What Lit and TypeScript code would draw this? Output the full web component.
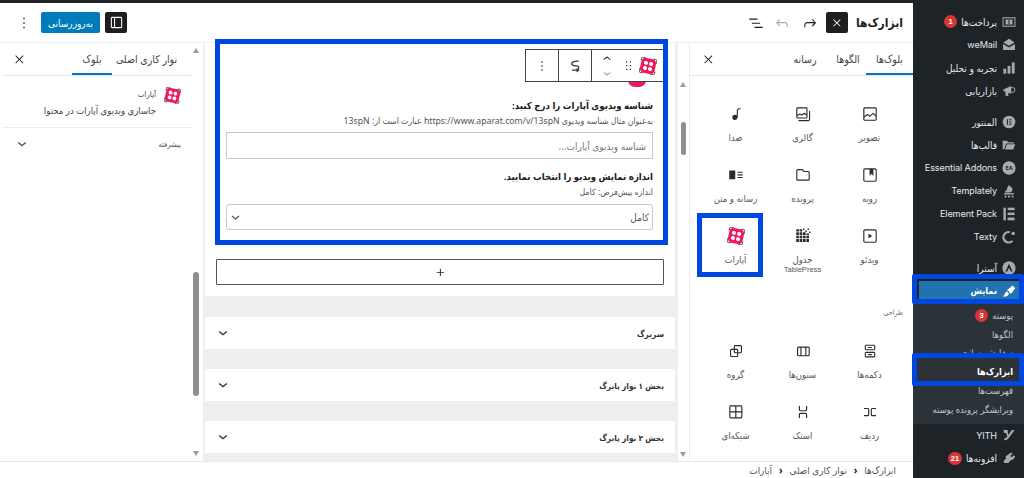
import { LitElement, html, css, svg } from "lit";
import { customElement } from "lit/decorators.js";

const P: Record<string, string> = {
  image: "M19 3H5c-1.1 0-2 .9-2 2v14c0 1.1.9 2 2 2h14c1.1 0 2-.9 2-2V5c0-1.1-.9-2-2-2zM5 4.5h14c.3 0 .5.2.5.5v8.4l-3-2.9c-.3-.3-.8-.3-1 0L11.9 14 9 12c-.3-.2-.6-.2-.8 0l-3.6 2.6V5c-.1-.3.1-.5.4-.5zm14 15H5c-.3 0-.5-.2-.5-.5v-2.4l4.1-3 3 1.9c.3.2.7.2.9-.1L16 12l3.5 3.4V19c0 .3-.2.5-.5.5z",
  gallery: "M16.375 4.5H4.625a.125.125 0 0 0-.125.125v8.254l2.859-1.54a.75.75 0 0 1 .68-.016l2.384 1.142 2.89-2.074a.75.75 0 0 1 .874 0l2.313 1.66V4.625a.125.125 0 0 0-.125-.125zm.125 9.398-2.75-1.975-2.813 2.02a.75.75 0 0 1-.76.067l-2.444-1.17L4.5 14.583v1.792c0 .069.056.125.125.125h11.75a.125.125 0 0 0 .125-.125v-2.477zM4.625 3C3.728 3 3 3.728 3 4.625v11.75C3 17.273 3.728 18 4.625 18h11.75c.898 0 1.625-.727 1.625-1.625V4.625C18 3.728 17.273 3 16.375 3H4.625zM20 8v11c0 .69-.31 1-.999 1H6v1.5h13.001c1.52 0 2.499-.982 2.499-2.5V8H20z",
  audio: "M17.7 4.3c-1.2 0-2.8 0-3.8 1-.6.6-.9 1.5-.9 2.6V14c-.6-.6-1.5-1-2.5-1C8.6 13 7 14.6 7 16.5S8.6 20 10.5 20c1.5 0 2.8-1 3.3-2.3.5-.8.7-1.8.7-2.7V7.9c0-.7.2-1.2.5-1.6.6-.6 1.8-.6 2.8-.6h.3V4.3h-.4z",
  cover: "M18.7 3H5.3C4 3 3 4 3 5.3v13.4C3 20 4 21 5.3 21h13.4c1.3 0 2.3-1 2.3-2.3V5.3C21 4 20 3 18.7 3zm.8 15.7c0 .4-.4.8-.8.8H5.3c-.4 0-.8-.4-.8-.8V5.3c0-.4.4-.8.8-.8h6.2v8.9l2.5-3.1 2.5 3.1V4.5h2.2c.4 0 .8.4.8.8v13.4z",
  file: "M12.848 8a1 1 0 0 1-.914-.594l-.723-1.63a.5.5 0 0 0-.447-.276H5a.5.5 0 0 0-.5.5v11.5a.5.5 0 0 0 .5.5h14a.5.5 0 0 0 .5-.5v-9A.5.5 0 0 0 19 8h-6.152zm.612-1.5H19a2 2 0 0 1 2 2v9a2 2 0 0 1-2 2H5a2 2 0 0 1-2-2V6a2 2 0 0 1 2-2h5.764a2 2 0 0 1 1.789 1.106l.907 1.394z",
  media: "M3 6v11.5h8V6H3zm11 3h7V7.5h-7V9zm7 3.5h-7V11h7v1.5zM14 16h7v-1.5h-7V16z",
  video: "M18.7 3H5.3C4 3 3 4 3 5.3v13.4C3 20 4 21 5.3 21h13.4c1.3 0 2.3-1 2.3-2.3V5.3C21 4 20 3 18.7 3zm.8 15.7c0 .4-.4.8-.8.8H5.3c-.4 0-.8-.4-.8-.8V5.3c0-.4.4-.8.8-.8h13.4c.4 0 .8.4.8.8v13.4zM10 15l5-3-5-3v6z",
  buttons: "M14.5 17.5H9.5V16H14.5V17.5Z M14.5 8H9.5V6.5H14.5V8Z M7 3.5H17C18.1 3.5 19 4.4 19 5.5V9C19 10.1 18.1 11 17 11H7C5.9 11 5 10.1 5 9V5.5C5 4.4 5.9 3.5 7 3.5ZM17 5H7C6.7 5 6.5 5.2 6.5 5.5V9C6.5 9.3 6.7 9.5 7 9.5H17C17.3 9.5 17.5 9.3 17.5 9V5.5C17.5 5.2 17.3 5 17 5Z M7 13H17C18.1 13 19 13.9 19 15V18.5C19 19.6 18.1 20.5 17 20.5H7C5.9 20.5 5 19.6 5 18.5V15C5 13.9 5.9 13 7 13ZM17 14.5H7C6.7 14.5 6.5 14.7 6.5 15V18.5C6.5 18.8 6.7 19 7 19H17C17.3 19 17.5 18.8 17.5 18.5V15C17.5 14.7 17.3 14.5 17 14.5Z",
  columns: "M15 7.5h-5v10h5v-10Zm1.5 0v10H19a.5.5 0 0 0 .5-.5V8a.5.5 0 0 0-.5-.5h-2.5ZM6 7.5h2.5v10H6a.5.5 0 0 1-.5-.5V8a.5.5 0 0 1 .5-.5ZM6 6h13a2 2 0 0 1 2 2v9a2 2 0 0 1-2 2H6a2 2 0 0 1-2-2V8a2 2 0 0 1 2-2Z",
  group: "M18 4h-7c-1.1 0-2 .9-2 2v3H6c-1.1 0-2 .9-2 2v7c0 1.1.9 2 2 2h7c1.1 0 2-.9 2-2v-3h3c1.1 0 2-.9 2-2V6c0-1.1-.9-2-2-2zm-4.5 14c0 .3-.2.5-.5.5H6c-.3 0-.5-.2-.5-.5v-7c0-.3.2-.5.5-.5h3V13c0 1.1.9 2 2 2h2.5v3zm0-4.5H11c-.3 0-.5-.2-.5-.5v-2.5H13c.3 0 .5.2.5.5v2.5zm5-.5c0 .3-.2.5-.5.5h-3V11c0-1.1-.9-2-2-2h-2.5V6c0-.3.2-.5.5-.5h7c.3 0 .5.2.5.5v7z",
  row: "M4 6.5h5a2 2 0 0 1 2 2v7a2 2 0 0 1-2 2H4V16h5a.5.5 0 0 0 .5-.5v-7A.5.5 0 0 0 9 8H4V6.5Zm16 0h-5a2 2 0 0 0-2 2v7a2 2 0 0 0 2 2h5V16h-5a.5.5 0 0 1-.5-.5v-7A.5.5 0 0 1 15 8h5V6.5Z",
  stack: "M17.5 4v5a2 2 0 0 1-2 2h-7a2 2 0 0 1-2-2V4H8v5a.5.5 0 0 0 .5.5h7A.5.5 0 0 0 16 9V4h1.5Zm0 16v-5a2 2 0 0 0-2-2h-7a2 2 0 0 0-2 2v5H8v-5a.5.5 0 0 1 .5-.5h7a.5.5 0 0 1 .5.5v5h1.5Z",
  grid: "M3 5c0-1.1.9-2 2-2h13.5c1.1 0 2 .9 2 2v13.5c0 1.1-.9 2-2 2H5c-1.1 0-2-.9-2-2zm2-.5h6V11H4.500V5c0-.28.22-.5.5-.5zm-.5 8v6c0 .28.22.5.5.5h6v-6.500zm8 0V19h6c.28 0 .5-.22.5-.5v-6zm0-8V11H19V5c0-.28-.22-.5-.5-.5z",
  table: "M3 7h3.500v3.500H3zM7.500 7H11v3.500H7.500zM12 7h3.500v3.500H12zM16.500 8.500H20v2h-3.500zM3 11.500h3.500V15H3zM7.500 11.500H11V15H7.500zM12 11.500h3.500V15H12zM16.500 11.500H20V15h-3.500zM3 16h3.500v4H3zM7.500 16H11v4H7.500zM12 16h3.500v4H12zM16.500 16H20v4h-3.500zM3 3h3.500v3H3zM7.500 3H11v3H7.500zM12 2h2v2h-2zM15 4.500h2v2h-2zM18 2h2v2h-2zM20 6h2v2h-2z",
  close: "M13 11.800l6.200-6.300-1.200-1.200-6.300 6.200-6.200-6.200-1.200 1.200 6.200 6.300-6.200 6.200 1.200 1.200 6.200-6.200 6.300 6.200 1.200-1.200z",
  chevron: "M6.300 8.500 12 13.200 17.700 8.500 19.300 10.200 12 16.300 4.700 10.200z",
  more: "M13 19h-2v-2h2v2zm0-6h-2v-2h2v2zm0-6h-2V5h2v2z",
  plus: "M11 12.500V17.500H12.500V12.500H17.500V11H12.500V6H11V11H6V12.500H11Z",
  sidebar: "M18 4H6c-1.100 0-2 .9-2 2v12c0 1.100.9 2 2 2h12c1.100 0 2-.9 2-2V6c0-1.100-.9-2-2-2zM8.500 18.500H6c-.3 0-.5-.2-.5-.5V6c0-.3.2-.5.5-.5h2.500v13zm10-.5c0 .3-.2.5-.5.5h-8v-13h8c.3 0 .5.2.5.5v12z",
  undo: "M18.300 11.700c-.6-.6-1.400-.9-2.300-.9H6.700l2.900-3.300-1.100-1-4.500 5L8.500 16.500l1-1-2.700-3.200H16c.5 0 .9.2 1.300.5 1 1 1 3.400 1 4.500v.3h1.500v-.2c0-1.500 0-4.300-1.500-5.700z",
  redo: "M15.600 6.500l-1.100 1 2.900 3.300H8c-.9 0-1.700.3-2.300.9-1.400 1.500-1.400 4.200-1.400 5.600v.2h1.500v-.3c0-1.100 0-3.500 1-4.500.3-.3.700-.5 1.300-.5h9.200L14.500 15.500l1.100 1.100 4.500-4.600-4.500-5.500z",
  list: "M3 6h11v1.500H3V6zm3.500 5.500h11V13h-11v-1.500zM21 17H10v1.500h11V17z",
  transform: "M17 5.500C12 5 7.500 6.500 7.500 9s4.500 2.700 7.500 3.200 3 4.800-2 5.300H8",
  up: "M6.500 12.400 12 8l5.500 4.400-.9 1.200L12 10l-4.500 3.600-1-1.200z",
  drag: "M8 7h2V5H8v2zm0 6h2v-2H8v2zm0 6h2v-2H8v2zm6-14v2h2V5h-2zm0 8h2v-2h-2v2zm0 6h2v-2h-2v2z",
};

const ic = (n: string, size = 18, cls = "") =>
  html`<svg class=${cls} width=${size} height=${size} viewBox="0 0 24 24" fill="currentColor" fill-rule="evenodd" aria-hidden="true">${svg`<path d=${P[n]}></path>`}</svg>`;

const aparat = (size: number) =>
  html`<svg width=${size} height=${size} viewBox="0 0 24 24" aria-hidden="true">${svg`
    <g transform="rotate(12 12 12)">
      <rect x="2" y="2" width="20" height="20" rx="5.500" fill="#ed1b5a"></rect>
      <path d="M1.500 6.500V4a2.500 2.500 0 0 1 2.500-2.500h2.500M17.500 1.500H20A2.500 2.500 0 0 1 22.500 4v2.500M22.500 17.500V20a2.500 2.500 0 0 1-2.500 2.500h-2.500M6.500 22.500H4A2.500 2.500 0 0 1 1.500 20v-2.500" fill="none" stroke="#4a2030" stroke-width="1.200"></path>
      <circle cx="8.500" cy="8.500" r="2.700" fill="#fff"></circle><circle cx="15.500" cy="8.500" r="2.700" fill="#fff"></circle>
      <circle cx="8.500" cy="15.500" r="2.700" fill="#fff"></circle><circle cx="15.500" cy="15.500" r="2.700" fill="#fff"></circle>
    </g>`}</svg>`;

const menuIcon: Record<string, unknown> = {
  pay: svg`<rect x="1.500" y="4" width="17" height="12" fill="none" stroke="currentColor" stroke-width="1.500"></rect><rect x="5" y="6.500" width="10" height="7" fill="currentColor"></rect><path d="M10 7v6" stroke="#1d2327" stroke-width="1.500"></path>`,
  mail: svg`<path d="M10 1 18 6.500 10 11 2 6.500z"></path><path d="M1.500 8.500 10 13.500l8.500-5V17h-17z"></path>`,
  bars: svg`<rect x="2" y="11" width="4" height="7"></rect><rect x="8" y="7" width="4" height="11"></rect><rect x="14" y="2" width="4" height="16"></rect>`,
  mega: svg`<path d="M2 8 13 3v11L2 10z"></path><rect x="5" y="10" width="4" height="7"></rect><circle cx="15" cy="8.500" r="3.500" fill="none" stroke="currentColor" stroke-width="1.400"></circle>`,
  elem: svg`<circle cx="10" cy="10" r="9"></circle><path d="M7 6h1.500v8H7zM10 6h3.500v1.500H10zM10 9.250h3.500v1.500H10zM10 12.500h3.500V14H10z" fill="#1d2327"></path>`,
  folder: svg`<path d="M1 4h6l2 2h8v2H6L3 16H1z"></path><path d="M7 9h12l-3 7.500H4z"></path>`,
  ea: svg`<circle cx="10" cy="10" r="9.500"></circle>`,
  tpl: svg`<path d="M10 1c1 3 5 3 5 7 0 3-2 4-5 4H4c0-3 3-2 3-5 0-2 2-3 3-6z"></path><rect x="3" y="13" width="14" height="2"></rect><circle cx="5" cy="18" r="1.500"></circle><circle cx="10" cy="18" r="1.500"></circle><circle cx="15" cy="18" r="1.500"></circle>`,
  pack: svg`<rect x="2" y="1" width="3.500" height="18"></rect><rect x="8" y="1" width="10" height="3.500"></rect><rect x="8" y="8" width="10" height="3.500"></rect><rect x="8" y="15" width="10" height="4"></rect>`,
  texty: svg`<path d="M15 15.500A7.500 7.500 0 1 1 11 3" fill="none" stroke="currentColor" stroke-width="3"></path><circle cx="16" cy="5" r="2.500"></circle>`,
  astra: svg`<circle cx="10" cy="10" r="9.500"></circle><path d="M10 4 15 15h-2.500L10 9.500 7.500 15H5z" fill="#1d2327"></path>`,
  brush: svg`<path d="M7 9 15 2l4 4-6 8-2-1-1.500-3z"></path><path d="M7 10.500l3 3c-1 4-5 5-8.500 4.500 2-1 2-5 5.500-7.500z"></path>`,
  yith: svg`<path d="M2 3h6l1 7 5-7h4l-8 11c-2 3-5 4-7 3l1-3c2 .5 3 0 3.500-1L6 7H3z"></path>`,
  plug: svg`<path d="M13 2l2 2-3 3 2 2 3-3 2 2-4 5-2-.5-4 4.500H3.500L2 15l4-5-1-2z"></path>`,
};

const mi = (name: string, label?: string) =>
  html`<span class="mi"><svg width="14" height="14" viewBox="0 0 20 20" fill="currentColor" aria-hidden="true">${menuIcon[name]}</svg>${label ? html`<b>${label}</b>` : ""}</span>`;

const blocks1 = [
  ["image", "تصویر"], ["gallery", "گالری"], ["audio", "صدا"],
  ["cover", "رویه"], ["file", "پرونده"], ["media", "رسانه و متن"],
  ["video", "ویدئو"], ["table", "جدول", "TablePress"], ["aparat", "آپارات"],
];
const blocks2 = [
  ["buttons", "دکمه‌ها"], ["columns", "ستون‌ها"], ["group", "گروه"],
  ["row", "ردیف"], ["stack", "استک"], ["grid", "شبکه‌ای"],
];

@customElement("app-root")
export class AppRoot extends LitElement {
  static styles = css`
    :host { display: flex; flex-direction: column; width: 1024px; height: 478px; overflow: hidden; position: relative;
      direction: rtl; background: #fff; color: #333; font-family: "Noto Sans", "DejaVu Sans Condensed", "DejaVu Sans", sans-serif; font-size: 10px; }
    * { box-sizing: border-box; }
    svg { display: block; flex: none; }
    .topline { height: 3px; background: #1d2327; flex: none; }
    .body { flex: 1; display: flex; min-height: 0; }

    .admin { width: 111px; flex: none; background: #1d2327; color: #e6e8ea; padding-top: 7px; font-size: 10px; }
    .r { height: 23px; display: flex; align-items: center; padding: 0 8px 0 0; white-space: nowrap; }
    .sep { margin-top: 8px; }
    .mi { width: 14px; height: 14px; color: #a7aaad; margin-left: 5px; position: relative; flex: none; }
    .mi b { position: absolute; inset: 0; display: flex; align-items: center; justify-content: center; font-size: 5.500px; color: #1d2327; direction: ltr; }
    .lat { font-family: "Inter", "Liberation Sans", sans-serif; font-size: 9.100px; letter-spacing: -.1px; }
    .badge { background: #d63638; color: #fff; border-radius: 9px; font-size: 7.500px; font-weight: 700; min-width: 13px; height: 13px; padding: 0 3px; margin-right: 4px;
      display: inline-flex; align-items: center; justify-content: center; font-family: "Liberation Sans", sans-serif; }
    .cur { color: #fff; background: #2271b1; margin: 2px 5px; width: 100px; height: 19px; padding-right: 3px; font-weight: 700; font-size: 9.200px; }
    .cur .mi { color: #fff; }
    .sub { background: #2c3338; padding: 4px 0 5px; color: #c3c4c7; font-size: 9.400px; }
    .sub div { height: 18.800px; display: flex; align-items: center; padding-right: 11px; white-space: nowrap; }
    .sub .act { color: #fff; font-weight: 700; font-size: 9.200px; }

    .main { flex: 1; display: flex; flex-direction: column; min-width: 0; }
    .head { height: 40px; flex: none; display: flex; align-items: center; border-bottom: 1px solid #eee; padding: 0 10px 0 15px; }
    .title { font-size: 12px; font-weight: 700; color: #222; width: 41px; white-space: nowrap; margin-left: 14px; }
    .blk { width: 22px; height: 21px; border-radius: 2px; background: #1e1e1e; color: #fff; display: flex; align-items: center; justify-content: center; flex: none; }
    .redo { margin-right: 7px; color: #1e1e1e; }
    .undo { margin-right: 10px; color: #aaa; }
    .list { margin-right: 8px; color: #1e1e1e; }
    .spacer { flex: 1; }
    .publish { width: 59px; height: 21px; background: #007cba; color: #fff; border-radius: 2px; display: flex; align-items: center; justify-content: center; font-size: 10px; margin-right: 5px; }
    .kebab { margin-right: 8px; color: #333; }

    .panels { flex: 1; display: flex; min-height: 0; }
    .ins { width: 223px; flex: none; display: flex; flex-direction: column; min-height: 0; overflow: hidden; }
    .tabs { height: 33px; flex: none; display: flex; align-items: stretch; border-bottom: 1px solid #e4e4e4; }
    .tab { display: flex; align-items: center; justify-content: center; color: #444; font-size: 10.500px; white-space: nowrap; }
    .tab.on { box-shadow: inset 0 -2px 0 #007cba; }
    .x { margin-right: auto; align-self: center; color: #222; }
    .grid { display: grid; grid-template-columns: repeat(3, 67px); grid-auto-rows: 61px; padding: 0 10px 0 11px; }
    .g1 { margin-top: 21px; }
    .cell { display: flex; flex-direction: column; align-items: center; padding-top: 8px; color: #2b2b2b; }
    .cell span { margin-top: 10px; font-size: 9.500px; line-height: 10px; text-align: center; width: 62px; color: #555; }
    .cell em { display: block; font-style: normal; font-family: "Liberation Sans", sans-serif; font-size: 7.600px; }
    .design { font-size: 7px; color: #666; padding: 28px 10px 0; height: 54px; line-height: 9px; }

    .bar { flex: none; position: relative; background: #fff; }
    .bar i { position: absolute; background: #8f8f8f; border-radius: 3px; }
    .arr { position: absolute; width: 0; height: 0; border-left: 3.500px solid transparent; border-right: 3.500px solid transparent; }
    .arr.u { border-bottom: 5px solid #9a9a9a; }
    .arr.d { border-top: 5px solid #9a9a9a; }
    .b1 { width: 12px; border-right: 1px solid #eee; }
    .b1 i { left: 3px; width: 5px; top: 79px; height: 33px; }
    .b1 .u { left: 2px; top: 39px; }
    .b1 .d { left: 2px; top: 409px; }
    .b2 { width: 11px; }
    .b2 i { left: 1px; width: 6px; top: 229px; height: 124px; }
    .b2 .u { left: 1px; top: 5px; }
    .b2 .d { left: 1px; top: 408px; }

    .canvas { width: 475px; flex: none; background: #efefef; padding: 0 3px 0 2px; overflow: hidden; display: flex; flex-direction: column; }
    .card { height: 253px; flex: none; background: #fff; padding: 40px 22px 0 21px; }
    .logo { height: 15px; }
    .card h4 { margin: 0; font-size: 9.600px; line-height: 16px; font-weight: 700; color: #222; }
    .card p { margin: 1px 0 0; font-size: 8.700px; line-height: 13px; color: #555; }
    .field { height: 27px; border: 1px solid #c9c9c9; margin-top: 4px; display: flex; align-items: center; padding: 0 6px; color: #777; font-size: 10px; margin-bottom: 10px; }
    .sel { border-radius: 3px; height: 26px; justify-content: space-between; margin-top: 5px; margin-bottom: 0; color: #555; padding: 0 3px 0 2px; }
    .add { height: 26px; margin: 29px -11px 0 -10px; border: 1px solid #555; border-bottom-width: 1.500px; border-radius: 1px; display: flex; align-items: center; justify-content: center; color: #222; }
    .sec { height: 32px; flex: none; margin-top: 20px; background: #fff; display: flex; align-items: center; justify-content: space-between; padding: 0 11px 0 11px; font-weight: 700; font-size: 8.300px; color: #333; }
    .card + .sec { margin-top: 21px; }

    .set { flex: 1; min-width: 0; margin-left: 3px; display: flex; flex-direction: column; }
    .set .tabs { border-bottom: 1px solid #e4e4e4; padding-right: 11px; }
    .bhead { height: 52px; flex: none; border-bottom: 1px solid #eee; padding: 11px 11px 0 0; display: flex; gap: 8px; }
    .bhead div { font-size: 9.500px; color: #444; }
    .bhead .n { line-height: 13px; margin-bottom: 4px; font-size: 8px; }
    .bhead .d { line-height: 14px; }
    .adv { height: 31px; display: flex; align-items: center; justify-content: space-between; padding: 0 11px 0 12px; font-size: 7.500px; color: #555; }

    .crumb { height: 17px; flex: none; border-top: 1px solid #e8e8e8; display: flex; align-items: center; gap: 7px; padding-right: 17px; font-size: 9.800px; color: #555; }
    .crumb u { text-decoration: none; font-size: 10px; font-weight: 700; color: #222; direction: ltr; }

    .tb { position: absolute; left: 525px; top: 49px; width: 138px; height: 33px; background: #fff; border: 1px solid #444; border-right: 0; display: flex; color: #333; }
    .tb > div { display: flex; align-items: center; justify-content: center; flex: none; }
    .tb .t1 { width: 33px; border-right: 1px solid #444; }
    .tb .t2 { width: 32px; }
    .tb .t3 { width: 72px; border-left: 1px solid #444; justify-content: flex-end; gap: 3px; padding-right: 6px; }
    .pk { position: absolute; left: 628px; top: 80px; width: 18px; height: 7px; background: #ed1b5a; border-radius: 0 0 9px 9px; }
    .hl { position: absolute; border: 5px solid #0047e0; pointer-events: none; }
    .hl.a { left: 215px; top: 39px; width: 453px; height: 206px; }
    .hl.b { left: 697px; top: 213px; width: 66px; height: 64px; }
    .hl.c { left: 912px; top: 274px; width: 112px; height: 30px; border-radius: 2px; }
    .hl.d { left: 912px; top: 353px; width: 112px; height: 33px; border-radius: 2px; }
    .ud { display: flex; flex-direction: column; align-items: center; width: 14px; margin-right: 4px; }
    .ud svg + svg { transform: scaleY(-1); margin-top: -2px; opacity: .45; }
  `;

  private cell(b: string[]) {
    return html`<div class="cell">${b[0] === "aparat" ? aparat(18) : ic(b[0])}<span>${b[1]}${b[2] ? html`<em>${b[2]}</em>` : ""}</span></div>`;
  }

  render() {
    return html`
      <div class="topline"></div>
      <div class="body">
        <nav class="admin">
          <div class="r">${mi("pay")}پرداخت‌ها<span class="badge">1</span></div>
          <div class="r">${mi("mail")}<span class="lat">weMail</span></div>
          <div class="r">${mi("bars")}تجربه و تحلیل</div>
          <div class="r">${mi("mega")}بازاریابی</div>
          <div class="r sep">${mi("elem")}المنتور</div>
          <div class="r">${mi("folder")}قالب‌ها</div>
          <div class="r">${mi("ea", "EA")}<span class="lat">Essential Addons</span></div>
          <div class="r">${mi("tpl")}<span class="lat">Templately</span></div>
          <div class="r">${mi("pack")}<span class="lat">Element Pack</span></div>
          <div class="r">${mi("texty")}<span class="lat">Texty</span></div>
          <div class="r sep">${mi("astra")}آسترا</div>
          <div class="r cur">${mi("brush")}نمایش</div>
          <div class="sub">
            <div>پوسته<span class="badge">3</span></div>
            <div>الگوها</div>
            <div>سفارشی‌سازی</div>
            <div class="act">ابزارک‌ها</div>
            <div>فهرست‌ها</div>
            <div>ویرایشگر پرونده پوسته</div>
          </div>
          <div class="r">${mi("yith")}<span class="lat">YITH</span></div>
          <div class="r">${mi("plug")}افزونه‌ها<span class="badge">21</span></div>
        </nav>

        <div class="main">
          <header class="head">
            <div class="title">ابزارک‌ها</div>
            <div class="blk">${ic("close", 12)}</div>
            ${ic("redo", 18, "redo")}
            ${ic("undo", 18, "undo")}
            ${ic("list", 18, "list")}
            <div class="spacer"></div>
            <div class="blk">${ic("sidebar", 17)}</div>
            <div class="publish">به‌روزرسانی</div>
            ${ic("more", 18, "kebab")}
          </header>

          <div class="panels">
            <section class="ins">
              <div class="tabs">
                <div class="tab on" style="width:47px">بلوک‌ها</div>
                <div class="tab" style="width:36px">الگوها</div>
                <div class="tab" style="width:50px">رسانه</div>
                ${ic("close", 13, "x")}
                <div style="width:12px"></div>
              </div>
              <div class="grid g1">${blocks1.map((b) => this.cell(b))}</div>
              <div class="design">طراحی</div>
              <div class="grid">${blocks2.map((b) => this.cell(b))}</div>
            </section>

            <div class="bar b1"><span class="arr u"></span><i></i><span class="arr d"></span></div>

            <section class="canvas">
              <div class="card">
                <div class="logo"></div>
                <h4>شناسه ویدیوی آپارات را درج کنید:</h4>
                <p>به‌عنوان مثال شناسه ویدیوی https://www.aparat.com/v/13spN عبارت است از: 13spN</p>
                <div class="field">شناسه ویدیوی آپارات...</div>
                <h4>اندازه نمایش ویدیو را انتخاب نمایید.</h4>
                <p>اندازه پیش‌فرض: کامل</p>
                <div class="field sel"><span>کامل</span>${ic("chevron", 13)}</div>
                <div class="add">${ic("plus", 15)}</div>
              </div>
              <div class="sec"><span>سربرگ</span>${ic("chevron", 14)}</div>
              <div class="sec"><span>بخش ۱ نوار پابرگ</span>${ic("chevron", 14)}</div>
              <div class="sec"><span>بخش ۲ نوار پابرگ</span>${ic("chevron", 14)}</div>
            </section>

            <div class="bar b2"><span class="arr u"></span><i></i><span class="arr d"></span></div>

            <aside class="set">
              <div class="tabs">
                <div class="tab" style="width:69px">نوار کاری اصلی</div>
                <div class="tab on" style="width:40px">بلوک</div>
                ${ic("close", 13, "x")}
                <div style="width:10px"></div>
              </div>
              <div class="bhead">
                ${aparat(17)}
                <div>
                  <div class="n">آپارات</div>
                  <div class="d">جاسازی ویدیوی آپارات در محتوا</div>
                </div>
              </div>
              <div class="adv"><span>پیشرفته</span>${ic("chevron", 14)}</div>
            </aside>
          </div>

          <footer class="crumb">
            <span>ابزارک‌ها</span><u>›</u><span>نوار کاری اصلی</span><u>›</u><span>آپارات</span>
          </footer>
        </div>
      </div>

      <span class="pk"></span>
      <div class="tb" dir="ltr">
        <div class="t1">${ic("more", 16)}</div>
        <div class="t2"><svg width="18" height="18" viewBox="0 0 24 24" fill="none" stroke="currentColor" stroke-width="1.700">${svg`<path d=${P.transform}></path><path d="M14 14.500l4 3-4 3z" fill="currentColor" stroke="none"></path>`}</svg></div>
        <div class="t3">
          <div class="ud">${ic("up", 16)}${ic("up", 16)}</div>
          ${ic("drag", 15)}
          ${aparat(18)}
        </div>
      </div>
      <div class="hl a"></div>
      <div class="hl b"></div>
      <div class="hl c"></div>
      <div class="hl d"></div>
    `;
  }
}
